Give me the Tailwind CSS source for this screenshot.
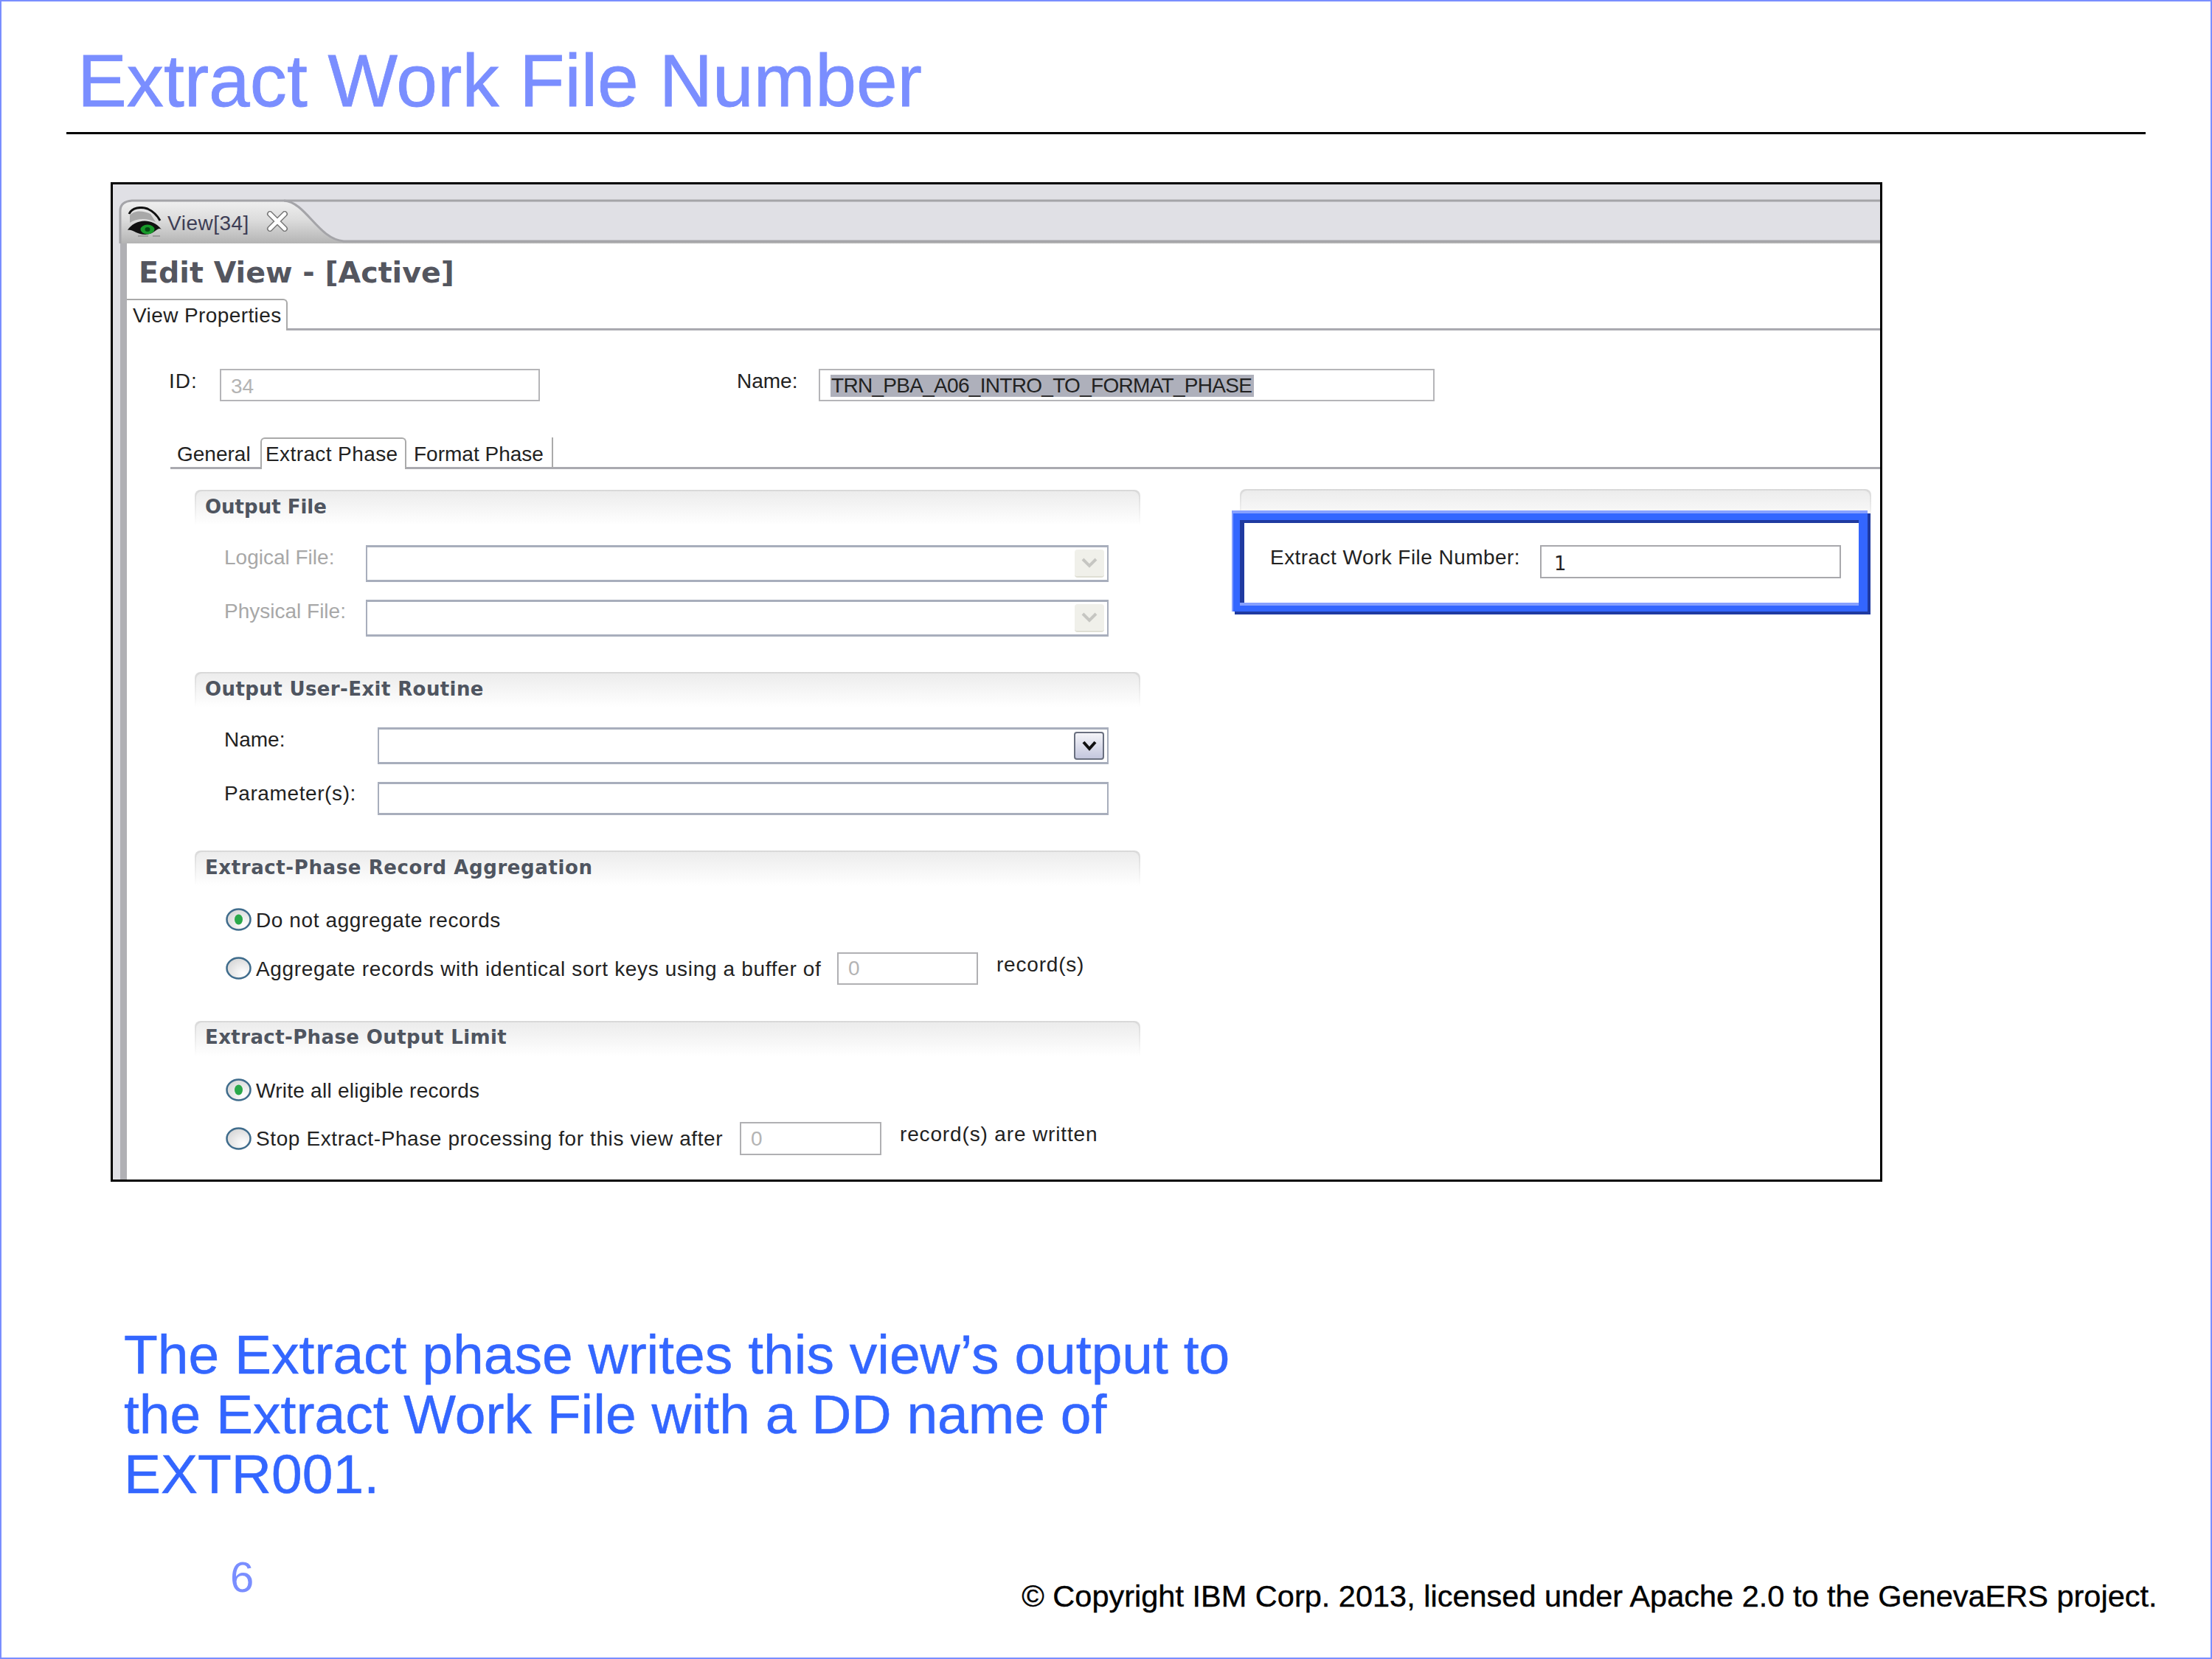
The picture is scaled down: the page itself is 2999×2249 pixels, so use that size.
<!DOCTYPE html>
<html><head><script src="https://cdn.jsdelivr.net/npm/@tailwindcss/browser@4"></script></head>
<body class="m-0 bg-white">
<div class="relative w-[2999px] h-[2249px] border-2 border-[#7a8eff] font-['Liberation_Sans',sans-serif] overflow-hidden flex flex-col">
  <div class="ml-[103px] mt-[50px] h-[113px] text-[100.2px] leading-[115px] text-[#7a8eff] [-webkit-text-stroke:0.8px_#7a8eff]">Extract Work File Number</div>
  <div class="ml-[88px] mt-[14px] w-[2819px] h-[3px] bg-black"></div>

  <!-- application screenshot -->
  <div class="relative ml-[148px] mt-[65px] w-[2402px] h-[1355px] border-[3px] border-black flex flex-col overflow-hidden text-[28px] leading-[32px] text-[#222]">
    <div class="relative h-[80px] shrink-0 bg-[#e0e0e5]">
      <svg class="absolute left-0 top-0" width="2396" height="80" viewBox="0 0 2396 80">
        <defs><linearGradient id="tab" x1="0" y1="0" x2="0" y2="1"><stop offset="0" stop-color="#f0f0f0"/><stop offset="0.45" stop-color="#dcdcdc"/><stop offset="1" stop-color="#b4b4b4"/></linearGradient>
        <radialGradient id="rb" cx="0.7" cy="0.75" r="0.9"><stop offset="0" stop-color="#ffffff"/><stop offset="1" stop-color="#d2d2d2"/></radialGradient></defs>
        <path d="M10 80V36Q10 23 26 22H232C262 24 278 74 313 77H2396V80Z" fill="url(#tab)"/>
        <path d="M10 80V36Q10 23 26 22H232C262 24 278 74 313 77H2396" fill="none" stroke="#a4a4a8" stroke-width="3"/>
        <path d="M232 22H2396" stroke="#a4a4a8" stroke-width="3"/>
      </svg>
      <svg class="absolute left-[20px] top-[30px]" width="46" height="42" viewBox="0 0 46 42">
        <path d="M3 12C10 4 22 6 31 10L38 21C26 15 12 16 3 22Z" fill="#a8a8a8"/>
        <path d="M2 10C6 1 18 0 27 3Q38 8 44 19" fill="none" stroke="#111" stroke-width="3"/>
        <path d="M0 32C8 18 32 13 46 31C40 27 37 38 24 38C12 38 7 30 0 32Z" fill="#111"/>
        <ellipse cx="27" cy="31" rx="9.5" ry="6.5" fill="#189a2a"/>
        <ellipse cx="27" cy="31" rx="3.5" ry="3" fill="#064a14"/>
        <path d="M14 40H28M34 40H44" stroke="#9a9a9a" stroke-width="2"/>
      </svg>
      <span class="absolute left-[74px] top-[37px] text-[#3d3d55] tracking-[0.5px]">View[34]</span>
      <svg class="absolute left-[208px] top-[36px]" width="30" height="28" viewBox="0 0 30 28">
        <path d="M5 4L25 24M25 4L5 24" stroke="#777" stroke-width="8" stroke-linecap="round"/>
        <path d="M5 4L25 24M25 4L5 24" stroke="#fff" stroke-width="5" stroke-linecap="round"/>
      </svg>
    </div>

    <div class="flex flex-1 min-h-0">
      <div class="w-[19px] shrink-0 bg-[#e0e0e5] border-r-[9px] border-[#b0b0b4]"></div>
      <div class="flex-1 flex flex-col bg-white">
        <div class="h-[75px] shrink-0 pl-[16px] pt-[17px] font-['DejaVu_Sans',sans-serif] font-bold text-[#54565f] text-[39.6px] leading-[44px]">Edit View - [Active]</div>
        <div class="flex h-[43px] shrink-0">
          <div class="w-[218px] border-t-2 border-r-2 border-[#aaa] rounded-tr-md pl-[8px] pt-[5px] tracking-[0.4px]">View Properties</div>
          <div class="flex-1 border-b-3 border-[#aaaab0]"></div>
        </div>

        <div class="flex mt-[52px] h-[44px] shrink-0 pl-[57px]">
          <span class="w-[69px] mt-[1px] tracking-[1px]">ID:</span>
          <div class="w-[434px] h-[44px] border-2 border-[#b5b5b8] pl-[13px] pt-[6px] text-[#b4b4b4]">34</div>
          <span class="ml-[267px] w-[111px] mt-[1px]">Name:</span>
          <div class="w-[835px] h-[44px] border-2 border-[#b5b5b8] pl-[14px] pt-[5px]"><span class="inline-block h-[30px] leading-[30px] bg-[#aeb0bb] pl-[1px] pr-[3px] text-[28px] tracking-[-0.7px]">TRN_PBA_A06_INTRO_TO_FORMAT_PHASE</span></div>
        </div>

        <div class="flex mt-[49px] h-[43px] shrink-0 ml-[59px] border-b-3 border-[#aaaab0]">
          <span class="w-[122px] pl-[9px] pt-[7px]">General</span>
          <div class="w-[198px] h-[43px] border-t-2 border-x-2 border-[#aaa] rounded-t-md bg-white pl-[5px] pt-[5px] tracking-[0.4px]">Extract Phase</div>
          <div class="w-[199px] h-[41px] border-r-2 border-[#aaa] pl-[10px] pt-[7px]">Format Phase</div>
        </div>

        <div class="flex ml-[92px] mt-[28px]">
          <div class="w-[1282px] shrink-0 flex flex-col">
            <div class="h-[48px] rounded-t-lg bg-linear-to-b from-[#d8d8d8] to-white px-[2px] pt-[2px]">
              <div class="h-full rounded-t-lg bg-linear-to-b from-[#ececec] to-white pl-[12px] pt-[6px] font-['DejaVu_Sans',sans-serif] font-bold text-[#4f5560] text-[26px] leading-[30px]">Output File</div>
            </div>
            <div class="flex mt-[27px] pl-[40px]">
              <span class="w-[192px] mt-[1px] text-[#a8a8a8]">Logical File:</span>
              <div class="w-[1007px] h-[50px] border-x-2 border-y-3 border-[#a8aebc] flex justify-end items-center pr-[4px]">
                <div class="w-[40px] h-[38px] rounded-sm bg-[#f0f0ea] border-b-2 border-[#dfdfd4] flex items-center justify-center"><svg width="24" height="16" viewBox="0 0 24 16"><path d="M3 3L12 12L21 3" fill="none" stroke="#c6c6c2" stroke-width="4"/></svg></div>
              </div>
            </div>
            <div class="flex mt-[24px] pl-[40px]">
              <span class="w-[192px] text-[#a8a8a8]">Physical File:</span>
              <div class="w-[1007px] h-[50px] border-x-2 border-y-3 border-[#a8aebc] flex justify-end items-center pr-[4px]">
                <div class="w-[40px] h-[38px] rounded-sm bg-[#f0f0ea] border-b-2 border-[#dfdfd4] flex items-center justify-center"><svg width="24" height="16" viewBox="0 0 24 16"><path d="M3 3L12 12L21 3" fill="none" stroke="#c6c6c2" stroke-width="4"/></svg></div>
              </div>
            </div>

            <div class="mt-[48px] h-[48px] rounded-t-lg bg-linear-to-b from-[#d8d8d8] to-white px-[2px] pt-[2px]">
              <div class="h-full rounded-t-lg bg-linear-to-b from-[#ececec] to-white pl-[12px] pt-[6px] font-['DejaVu_Sans',sans-serif] font-bold text-[#4f5560] text-[26px] leading-[30px] tracking-[0.4px]">Output User-Exit Routine</div>
            </div>
            <div class="flex mt-[27px] pl-[40px]">
              <span class="w-[208px] mt-[1px]">Name:</span>
              <div class="w-[991px] h-[50px] border-x-2 border-y-3 border-[#a8aebc] flex justify-end items-center pr-[4px]">
                <div class="w-[41px] h-[38px] rounded-[4px] bg-linear-to-b from-[#f4f4f8] to-[#c4c7de] border-2 border-[#6a7080] flex items-center justify-center"><svg width="22" height="16" viewBox="0 0 22 16"><path d="M3 3L11 12L19 3" fill="none" stroke="#111" stroke-width="4"/></svg></div>
              </div>
            </div>
            <div class="flex mt-[24px] pl-[40px]">
              <span class="w-[208px] tracking-[0.6px]">Parameter(s):</span>
              <div class="w-[991px] h-[45px] border-x-2 border-y-3 border-[#a8aebc]"></div>
            </div>

            <div class="mt-[48px] h-[48px] rounded-t-lg bg-linear-to-b from-[#d8d8d8] to-white px-[2px] pt-[2px]">
              <div class="h-full rounded-t-lg bg-linear-to-b from-[#ececec] to-white pl-[12px] pt-[6px] font-['DejaVu_Sans',sans-serif] font-bold text-[#4f5560] text-[26px] leading-[30px] tracking-[0.6px]">Extract-Phase Record Aggregation</div>
            </div>
            <div class="flex mt-[30px] pl-[42px] h-[31px]">
              <svg class="shrink-0" width="41" height="31" viewBox="0 0 41 31"><ellipse cx="17.5" cy="15.5" rx="16" ry="14" fill="url(#rb)" stroke="#3f6c8c" stroke-width="2.5"/><ellipse cx="17.5" cy="15.5" rx="5.5" ry="7" fill="#2aa84a"/></svg>
              <span class="mt-[1px] tracking-[0.6px]">Do not aggregate records</span>
            </div>
            <div class="flex mt-[29px] pl-[42px] h-[44px]">
              <svg class="shrink-0 mt-[6px]" width="41" height="31" viewBox="0 0 41 31"><ellipse cx="17.5" cy="15.5" rx="16" ry="14" fill="url(#rb)" stroke="#3f6c8c" stroke-width="2.5"/></svg>
              <span class="w-[788px] mt-[7px] tracking-[0.67px]">Aggregate records with identical sort keys using a buffer of</span>
              <div class="w-[191px] h-[44px] border-2 border-[#b0b0b3] pl-[13px] pt-[4px] text-[#b4b4b4]">0</div>
              <span class="ml-[25px] mt-[1px] tracking-[0.8px]">record(s)</span>
            </div>

            <div class="mt-[49px] h-[48px] rounded-t-lg bg-linear-to-b from-[#d8d8d8] to-white px-[2px] pt-[2px]">
              <div class="h-full rounded-t-lg bg-linear-to-b from-[#ececec] to-white pl-[12px] pt-[5px] font-['DejaVu_Sans',sans-serif] font-bold text-[#4f5560] text-[26px] leading-[30px] tracking-[0.4px]">Extract-Phase Output Limit</div>
            </div>
            <div class="flex mt-[30px] pl-[42px] h-[31px]">
              <svg class="shrink-0" width="41" height="31" viewBox="0 0 41 31"><ellipse cx="17.5" cy="15.5" rx="16" ry="14" fill="url(#rb)" stroke="#3f6c8c" stroke-width="2.5"/><ellipse cx="17.5" cy="15.5" rx="5.5" ry="7" fill="#2aa84a"/></svg>
              <span class="mt-[1px] tracking-[0.25px]">Write all eligible records</span>
            </div>
            <div class="flex mt-[28px] pl-[42px] h-[45px]">
              <svg class="shrink-0 mt-[7px]" width="41" height="31" viewBox="0 0 41 31"><ellipse cx="17.5" cy="15.5" rx="16" ry="14" fill="url(#rb)" stroke="#3f6c8c" stroke-width="2.5"/></svg>
              <span class="w-[656px] mt-[7px] tracking-[0.6px]">Stop Extract-Phase processing for this view after</span>
              <div class="w-[192px] h-[45px] border-2 border-[#b0b0b3] pl-[13px] pt-[5px] text-[#b4b4b4]">0</div>
              <span class="ml-[25px] mt-[1px] tracking-[0.85px]">record(s) are written</span>
            </div>
          </div>

          <div class="ml-[135px] w-[856px] -mt-[1px] h-[48px] rounded-t-lg bg-linear-to-b from-[#d8d8d8] to-white px-[2px] pt-[2px]">
            <div class="h-full rounded-t-lg bg-linear-to-b from-[#ececec] to-white"></div>
          </div>
        </div>
      </div>
    </div>

    <!-- highlight box laid over the form -->
    <div class="absolute left-[1517px] top-[442px] w-[862px] h-[137px] bg-[#3366ff] border-t-4 border-l-2 border-[#86a0ff] shadow-[4px_4px_0_#1f3aa0] pl-[9px]">
      <div class="w-[839px] h-[112px] bg-white border-t-4 border-l-[6px] border-[#1f3aa0] mt-[9px]">
        <div class="flex pl-[35px] pt-[30px]">
          <span class="w-[366px] mt-[1px] tracking-[0.45px]">Extract Work File Number:</span>
          <div class="w-[408px] h-[45px] border-2 border-[#a8a8ac] pl-[17px] pt-[7px] font-['DejaVu_Sans',sans-serif] text-[26px]">1</div>
        </div>
      </div>
      <div class="w-[839px] h-[4px] bg-[#86a0ff]"></div>
    </div>
  </div>

  <div class="ml-[166px] mt-[194px] text-[75px] leading-[81px] text-[#3366ff] [-webkit-text-stroke:0.5px_#3366ff]">The Extract phase writes this view’s output to<br>the Extract Work File with a DD name of<br>EXTR001.</div>
  <div class="flex items-start mt-[64px]">
    <span class="ml-[310px] text-[58px] leading-[70px] text-[#7a8eff]">6</span>
    <span class="ml-[1041px] mt-[36px] text-[41.5px] leading-[50px] text-black [-webkit-text-stroke:0.4px_#000]">© Copyright IBM Corp. 2013, licensed under Apache 2.0 to the GenevaERS project.</span>
  </div>
</div>
</body></html>
